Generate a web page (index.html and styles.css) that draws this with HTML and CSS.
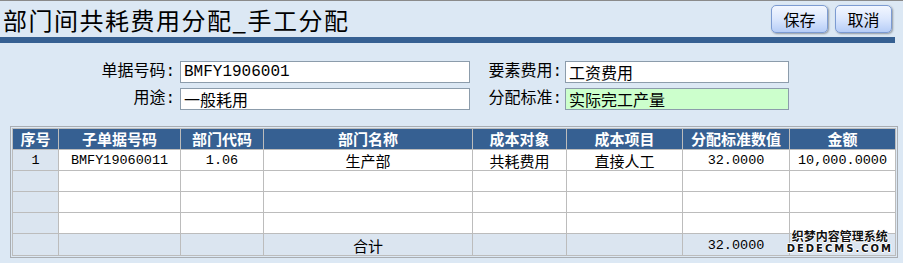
FILE: index.html
```html
<!DOCTYPE html>
<html lang="zh-CN">
<head>
    <meta charset="UTF-8">
    <title>部门间共耗费用分配_手工分配</title>
    <link rel="stylesheet" href="styles.css">
</head>
<body>
    <div class="header">
        <h1 class="title">部门间共耗费用分配_手工分配</h1>
        <div class="actions">
            <button class="btn">保存</button>
            <button class="btn">取消</button>
        </div>
    </div>
    <div class="bar"></div>

    <div class="form">
        <label class="lbl">单据号码:</label>
        <input class="field" type="text" value="BMFY1906001">
        <label class="lbl">要素费用:</label>
        <input class="field" type="text" value="工资费用">
        <label class="lbl">用途:</label>
        <input class="field" type="text" value="一般耗用">
        <label class="lbl">分配标准:</label>
        <input class="field green" type="text" value="实际完工产量">
    </div>

    <div class="grid-wrap">
        <table class="grid">
            <colgroup>
                <col style="width:46px">
                <col style="width:122px">
                <col style="width:83px">
                <col style="width:209px">
                <col style="width:94px">
                <col style="width:116px">
                <col style="width:107px">
                <col style="width:106px">
            </colgroup>
            <thead>
                <tr>
                    <th>序号</th>
                    <th>子单据号码</th>
                    <th>部门代码</th>
                    <th>部门名称</th>
                    <th>成本对象</th>
                    <th>成本项目</th>
                    <th>分配标准数值</th>
                    <th>金额</th>
                </tr>
            </thead>
            <tbody>
                <tr>
                    <td class="idx num">1</td>
                    <td class="num">BMFY19060011</td>
                    <td class="num">1.06</td>
                    <td>生产部</td>
                    <td>共耗费用</td>
                    <td>直接人工</td>
                    <td class="num">32.0000</td>
                    <td class="num">10,000.0000</td>
                </tr>
                <tr>
                    <td class="idx"></td><td></td><td></td><td></td><td></td><td></td><td></td><td></td>
                </tr>
                <tr>
                    <td class="idx"></td><td></td><td></td><td></td><td></td><td></td><td></td><td></td>
                </tr>
                <tr>
                    <td class="idx"></td><td></td><td></td><td></td><td></td><td></td><td></td><td></td>
                </tr>
                <tr class="sum">
                    <td></td><td></td><td></td>
                    <td>合计</td>
                    <td></td><td></td>
                    <td class="num">32.0000</td>
                    <td></td>
                </tr>
            </tbody>
        </table>
        <div class="mark">
            <span class="mark-cn">织梦内容管理系统</span>
            <span class="mark-en">DEDECMS.COM</span>
        </div>
    </div>
</body>
</html>
```

FILE: styles.css
```css
body {
    margin: 0;
    background-color: #dce8f4;
    font-family: "Liberation Mono", "Noto Sans CJK SC", monospace;
    color: #000;
    border-top: 1px solid #8a8a8a;
}
.header {
    width: 895px;
    height: 36px;
    box-sizing: border-box;
    padding: 0 3px 0 3px;
    display: flex;
    justify-content: space-between;
    align-items: center;
}
.title {
    margin: 0;
    padding-top: 2px;
    font-family: "Noto Sans CJK SC", sans-serif;
    font-size: 24px;
    font-weight: normal;
    letter-spacing: 1.5px;
    line-height: 28px;
}
.actions {
    display: flex;
    gap: 7px;
}
.btn {
    width: 57px;
    height: 28px;
    padding: 0;
    border: 1px solid #7c9bd2;
    border-radius: 5px;
    background: linear-gradient(#f3f7ff, #dbe7fd 50%, #b6cdf7);
    box-shadow: 1px 1px 2px rgba(0, 0, 0, 0.35);
    font-family: "Noto Sans CJK SC", sans-serif;
    font-size: 16px;
    line-height: 26px;
    color: #000;
    cursor: pointer;
}
.bar {
    width: 895px;
    height: 6px;
    background-color: #366092;
}
.form {
    margin-top: 18px;
    display: grid;
    grid-template-columns: 180px 290px 95px 224px;
    grid-auto-rows: 22px;
    row-gap: 5px;
}
.lbl {
    font-size: 16px;
    line-height: 22px;
    text-align: right;
    padding-right: 5px;
}
.lbl:nth-of-type(2n) {
    padding-right: 3px;
}
.field {
    box-sizing: border-box;
    height: 22px;
    margin: 0;
    padding: 0 3px;
    border: 1px solid #8c9cab;
    background-color: #fff;
    font-family: "Liberation Mono", "Noto Sans CJK SC", monospace;
    font-size: 16px;
    color: #000;
    outline: none;
}
.field.green {
    background-color: #ccffcc;
}
.grid-wrap {
    position: relative;
    margin: 16px 0 0 10px;
    width: 884px;
    border: 1px solid #a9adb2;
    padding: 1px;
}
.grid {
    width: 884px;
    table-layout: fixed;
    border-collapse: collapse;
    border: 1px solid #bcbcbc;
}
.grid th {
    height: 20px;
    padding: 0;
    box-sizing: content-box;
    background-color: #366092;
    color: #fff;
    font-family: "Noto Sans CJK SC", sans-serif;
    font-size: 15px;
    font-weight: bold;
    line-height: 20px;
    border: 1px solid #bcbcbc;
    border-top: none;
}
.grid td {
    height: 19px;
    padding: 1px 0 0 0;
    box-sizing: content-box;
    background-color: #fff;
    font-family: "Noto Sans CJK SC", sans-serif;
    font-size: 15px;
    line-height: 19px;
    text-align: center;
    border: 1px solid #bcbcbc;
}
.grid td.num {
    font-family: "Liberation Mono", monospace;
    font-size: 13.5px;
}
.grid td.idx,
.grid tr.sum td {
    background-color: #dbe5f0;
}
.grid tr.sum td {
    height: 18px;
    padding-top: 2px;
}
.mark {
    position: absolute;
    right: 4px;
    bottom: 3px;
    display: flex;
    flex-direction: column;
    align-items: center;
    font-family: "Noto Sans CJK SC", sans-serif;
    font-weight: bold;
    color: #111;
    text-shadow: 1px 0 0 #fff, -1px 0 0 #fff, 0 1px 0 #fff, 0 -1px 0 #fff;
}
.mark-cn {
    font-size: 12px;
    line-height: 13px;
}
.mark-en {
    margin-top: 1px;
    font-family: "DejaVu Sans", sans-serif;
    font-size: 10px;
    line-height: 11px;
    letter-spacing: 2px;
}
```
